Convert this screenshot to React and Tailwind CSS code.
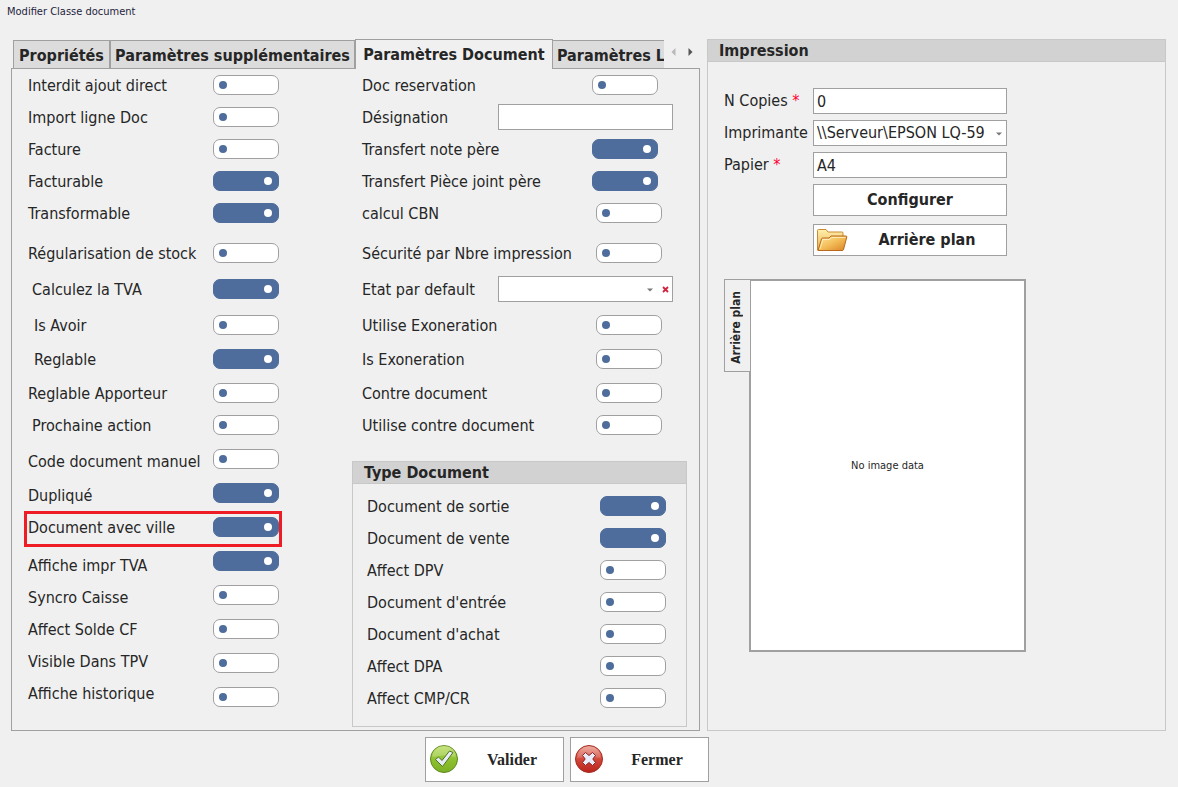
import { useState } from 'react'
import clsx from 'clsx'

// Each row keeps its own height for the label and for the switch
const generalOptions = [
  { id: 'ajout', label: 'Interdit ajout direct', labelH: 'h-8', switchH: 'h-8' },
  { id: 'import', label: 'Import ligne Doc', labelH: 'h-8', switchH: 'h-8' },
  { id: 'facture', label: 'Facture', labelH: 'h-8', switchH: 'h-8' },
  { id: 'facturable', label: 'Facturable', on: true, labelH: 'h-8', switchH: 'h-8' },
  { id: 'transformable', label: 'Transformable', on: true, labelH: 'h-10', switchH: 'h-10' },
  { id: 'stock', label: 'Régularisation de stock', labelH: 'h-9', switchH: 'h-9' },
  { id: 'tva', label: 'Calculez la TVA', on: true, indent: 'pl-1', labelH: 'h-9', switchH: 'h-9' },
  { id: 'avoir', label: 'Is Avoir', indent: 'pl-1.5', labelH: 'h-[34px]', switchH: 'h-[34px]' },
  { id: 'reglable', label: 'Reglable', on: true, indent: 'pl-1.5', labelH: 'h-[34px]', switchH: 'h-[34px]' },
  { id: 'apporteur', label: 'Reglable Apporteur', labelH: 'h-8', switchH: 'h-8' },
  { id: 'prochaine', label: 'Prochaine action', indent: 'pl-1', labelH: 'h-9', switchH: 'h-[34px]' },
  { id: 'manuel', label: 'Code document manuel', labelH: 'h-[34px]', switchH: 'h-[34px]' },
  { id: 'duplique', label: 'Dupliqué', on: true, labelH: 'h-8', switchH: 'h-[34px]' },
  { id: 'ville', label: 'Document avec ville', on: true, highlight: true, labelH: 'h-[38px]', switchH: 'h-[34px]' },
  { id: 'impr', label: 'Affiche impr TVA', on: true, labelH: 'h-8', switchH: 'h-[34px]' },
  { id: 'syncro', label: 'Syncro Caisse', labelH: 'h-8', switchH: 'h-[34px]' },
  { id: 'solde', label: 'Affect Solde CF', labelH: 'h-8', switchH: 'h-[34px]' },
  { id: 'tpv', label: 'Visible Dans TPV', labelH: 'h-8', switchH: 'h-[34px]' },
  { id: 'historique', label: 'Affiche historique', labelH: 'h-8', switchH: 'h-[34px]' },
]

const documentOptions = [
  { id: 'reservation', label: 'Doc reservation', margin: 'ml-[94px]', rowH: 'h-8' },
  { id: 'designation', label: 'Désignation', type: 'text', rowH: 'h-8' },
  { id: 'note', label: 'Transfert note père', on: true, margin: 'ml-[94px]', rowH: 'h-8' },
  { id: 'piece', label: 'Transfert Pièce joint père', on: true, margin: 'ml-[94px]', rowH: 'h-8' },
  { id: 'cbn', label: 'calcul CBN', margin: 'ml-[98px]', rowH: 'h-10' },
  { id: 'securite', label: 'Sécurité par Nbre impression', margin: 'ml-[98px]', rowH: 'h-9' },
  { id: 'etat', label: 'Etat par default', type: 'select', rowH: 'h-9' },
  { id: 'exoneration', label: 'Utilise Exoneration', margin: 'ml-[98px]', rowH: 'h-[34px]' },
  { id: 'isExoneration', label: 'Is Exoneration', margin: 'ml-[98px]', rowH: 'h-[34px]' },
  { id: 'contre', label: 'Contre document', margin: 'ml-[98px]', rowH: 'h-8' },
  { id: 'utiliseContre', label: 'Utilise contre document', margin: 'ml-[98px]', rowH: 'h-9' },
]

const typeOptions = [
  { id: 'sortie', label: 'Document de sortie', on: true },
  { id: 'vente', label: 'Document de vente', on: true },
  { id: 'dpv', label: 'Affect DPV' },
  { id: 'entree', label: "Document d'entrée" },
  { id: 'achat', label: "Document d'achat" },
  { id: 'dpa', label: 'Affect DPA' },
  { id: 'cmp', label: 'Affect CMP/CR' },
]

const field = 'h-[26px] w-full border border-[#a0a0a0] bg-white px-[3px] outline-none'

function Switch({ id, on, className }) {
  const [checked, setChecked] = useState(!!on)
  return (
    <input
      id={id}
      type="checkbox"
      role="switch"
      checked={checked}
      onChange={(e) => setChecked(e.target.checked)}
      className={clsx(
        'flex h-5 w-[66px] shrink-0 appearance-none items-center rounded-[7px] border border-[#a0a0a0] bg-white pr-1.5 pl-[5px]',
        'before:block before:size-2 before:rounded-full before:bg-[#4e6d9c]',
        'checked:justify-end checked:border-[#4e6d9c] checked:bg-[#4e6d9c] checked:before:bg-white',
        className
      )}
    />
  )
}

function Caret({ className }) {
  return (
    <svg viewBox="0 0 6 4" className={clsx('pointer-events-none absolute h-1 w-1.5', className)}>
      <path d="M0 0.5h6L3 3.5z" fill="#777" />
    </svg>
  )
}

function FolderIcon() {
  return (
    <svg viewBox="0 0 32 26" className="h-[26px] w-8 shrink-0">
      <defs>
        <linearGradient id="folderBack" x1="0" y1="0" x2="0" y2="1">
          <stop offset="0" stopColor="#fff0ac" />
          <stop offset="1" stopColor="#e9b04e" />
        </linearGradient>
        <linearGradient id="folderFront" x1="0" y1="0" x2="1" y2="1">
          <stop offset="0" stopColor="#ffe9a0" />
          <stop offset="0.5" stopColor="#f3bd58" />
          <stop offset="1" stopColor="#d98324" />
        </linearGradient>
      </defs>
      <path d="M1.5 23V3.500q0-1 1-1h7.500l2 2.500h14q1 0 1 1v17z" fill="url(#folderBack)" stroke="#c98a35" />
      <path d="M2 23.500l3.500-11.500q.3-1 1.300-1h6.200l2-2h15q1 0 .8 1l-3.300 12.500q-.3 1-1.300 1z" fill="url(#folderFront)" stroke="#b9681d" />
      <path d="M4 22l2.800-9.500h7l2-2h13.500" fill="none" stroke="#fff3c6" strokeOpacity="0.8" />
    </svg>
  )
}

function CheckIcon() {
  return (
    <svg viewBox="0 0 30 30" className="size-[30px] shrink-0">
      <defs>
        <linearGradient id="green" x1="0" y1="0" x2="0" y2="1">
          <stop offset="0" stopColor="#b9dc5a" />
          <stop offset="0.5" stopColor="#8fc231" />
          <stop offset="1" stopColor="#7cb024" />
        </linearGradient>
      </defs>
      <circle cx="15" cy="15" r="13.500" fill="url(#green)" stroke="#5d8a22" />
      <path d="M3.500 13a11.500 11.500 0 0 1 23 0q-11-3-23 0z" fill="#fff" fillOpacity="0.22" />
      <path d="M6.500 15.500l3-2.500 3.500 3.500 7.500-9.500 3.500 1.500L13.500 22.500z" fill="#e8ecf8" stroke="#4f7420" strokeLinejoin="round" />
    </svg>
  )
}

function CloseIcon() {
  return (
    <svg viewBox="0 0 30 30" className="size-[30px] shrink-0">
      <defs>
        <linearGradient id="red" x1="0" y1="0" x2="0" y2="1">
          <stop offset="0" stopColor="#eda394" />
          <stop offset="0.5" stopColor="#d2483a" />
          <stop offset="1" stopColor="#b9231c" />
        </linearGradient>
      </defs>
      <circle cx="15" cy="15" r="13.500" fill="url(#red)" stroke="#a32d24" />
      <path d="M3.500 14a11.500 11.500 0 0 1 23 0q-11-2-23 0z" fill="#fff" fillOpacity="0.15" />
      <path
        d="M11.500 8.500L15 11.500l3.500-3 3 3L18.800 15l2.700 3.500-3 3L15 18.500l-3.500 3-3-3 2.700-3.500-2.700-3.500z"
        fill="#e8ecf8"
        stroke="#8c2320"
        strokeLinejoin="round"
      />
    </svg>
  )
}

function Tabs() {
  const tab = 'h-7 shrink-0 overflow-hidden border border-b-0 border-[#a0a0a0] bg-[#dcdcdc] pt-0.5 whitespace-nowrap'
  return (
    <div role="tablist" className="flex items-end pl-0.5 text-base font-bold">
      <button role="tab" className={clsx(tab, 'w-[97px]')}>Propriétés</button>
      <button role="tab" className={clsx(tab, 'w-[245px]')}>Paramètres supplémentaires</button>
      <button role="tab" aria-selected="true" className="z-10 -mb-px h-[30px] w-[198px] shrink-0 border border-b-0 border-[#a0a0a0] bg-[#f0f0f0] whitespace-nowrap">
        Paramètres Document
      </button>
      <button role="tab" className={clsx(tab, 'w-[111px] border-x-0 pl-1 text-left')}>Paramètres Ligne</button>
      <div className="flex h-7 items-center gap-3 pb-1 pl-[7px]">
        <button aria-label="Précédent">
          <svg viewBox="0 0 5 8" className="h-2 w-[5px]"><path d="M4.500 0v8L0.500 4z" fill="#b8b8b8" /></svg>
        </button>
        <button aria-label="Suivant">
          <svg viewBox="0 0 5 8" className="h-2 w-[5px]"><path d="M0.500 0v8L4.500 4z" fill="#555" /></svg>
        </button>
      </div>
    </div>
  )
}

function GeneralColumn() {
  return (
    <div className="flex w-[340px] shrink-0 pl-4">
      <div className="w-[185px]">
        {generalOptions.map((o) => (
          <div key={o.id} className={clsx('relative', o.labelH, o.indent)}>
            <label htmlFor={o.id} className="flex h-8 items-center pt-0.5 whitespace-nowrap">{o.label}</label>
            {o.highlight && (
              <div className="pointer-events-none absolute top-0 -left-1 z-10 h-9 w-[258px] border-3 border-[#ee1c25]" />
            )}
          </div>
        ))}
      </div>
      <div>
        {generalOptions.map((o) => (
          <div key={o.id} className={o.switchH}>
            <div className="flex h-8 items-center">
              <Switch id={o.id} on={o.on} />
            </div>
          </div>
        ))}
      </div>
    </div>
  )
}

function Control({ option }) {
  if (option.type === 'text') return <input id={option.id} type="text" className={field} />
  if (option.type === 'select') {
    return (
      <div className="relative w-full">
        <select id={option.id} className={clsx(field, 'block appearance-none')}>
          <option></option>
        </select>
        <Caret className="top-3 right-5" />
        <button aria-label="Effacer" className="absolute top-2.5 right-1 flex">
          <svg viewBox="0 0 7 7" className="size-[7px]">
            <path d="M1 1l5 5M6 1L1 6" stroke="#d0243f" strokeWidth="1.800" />
          </svg>
        </button>
      </div>
    )
  }
  return <Switch id={option.id} on={option.on} className={option.margin} />
}

function DocumentColumn() {
  return (
    <div className="w-[335px] shrink-0 pb-[3px]">
      {documentOptions.map((o) => (
        <div key={o.id} className={o.rowH}>
          <div className="flex h-8 items-center pl-2.5">
            <label htmlFor={o.id} className="w-[136px] shrink-0 pt-0.5 whitespace-nowrap">{o.label}</label>
            <div className="flex w-[175px] shrink-0 items-center">
              <Control option={o} />
            </div>
          </div>
        </div>
      ))}

      <section className="mt-4 border border-[#c8c8c8] pb-3">
        <h2 className="h-[22px] border-b border-[#c8c8c8] bg-[#d2d2d2] pl-[11px] text-base leading-[22px] font-bold">Type Document</h2>
        <div className="pt-1.5">
          {typeOptions.map((o) => (
            <div key={o.id} className="flex h-8 items-center justify-between pr-5 pl-3.5">
              <label htmlFor={o.id} className="pt-0.5">{o.label}</label>
              <Switch id={o.id} on={o.on} />
            </div>
          ))}
        </div>
      </section>
    </div>
  )
}

function PrintPanel() {
  const button = 'flex h-8 w-full items-center border border-[#a0a0a0] bg-white text-base font-bold'
  return (
    <section className="border border-[#c8c8c8]">
      <h2 className="h-[22px] border-b border-[#c8c8c8] bg-[#d2d2d2] pl-[11px] text-base leading-[22px] font-bold">Impression</h2>
      <div className="px-4 pt-[26px]">
        <div className="grid grid-cols-[89px_194px] items-center gap-y-1.5">
          <label htmlFor="copies">N Copies <span className="text-[#ff0033]">*</span></label>
          <input id="copies" type="text" defaultValue="0" className={field} />
          <label htmlFor="imprimante">Imprimante</label>
          <div className="relative">
            <select id="imprimante" className={clsx(field, 'block appearance-none')}>
              <option>\\Serveur\EPSON LQ-59</option>
            </select>
            <Caret className="top-3 right-[5px]" />
          </div>
          <label htmlFor="papier">Papier <span className="text-[#ff0033]">*</span></label>
          <input id="papier" type="text" defaultValue="A4" className={field} />
          <div className="col-start-2 flex flex-col gap-2">
            <button className={clsx(button, 'justify-center')}>Configurer</button>
            <button className={clsx(button, 'pl-0.5')}>
              <FolderIcon />
              <span className="flex-1 text-center">Arrière plan</span>
            </button>
          </div>
        </div>

        <div className="mt-[23px] flex items-start">
          <button role="tab" className="z-10 -mr-0.5 flex h-[93px] w-[27px] items-center justify-center border border-[#a0a0a0] bg-[#f0f0f0] pt-1 pr-1 text-xs font-bold">
            <span className="rotate-180 whitespace-nowrap [writing-mode:vertical-rl]">Arrière plan</span>
          </button>
          <div className="flex h-[373px] w-[277px] items-center justify-center border-2 border-[#a0a0a0] bg-white pt-0.5 text-[11px]">
            No image data
          </div>
        </div>
      </div>
    </section>
  )
}

function App() {
  const action = "flex h-[45px] w-[139px] items-center border border-[#a0a0a0] bg-white pb-0.5 pl-[3px] font-['Liberation_Serif',serif] text-base font-bold"
  return (
    <div className="min-h-screen bg-[#f0f0f0] font-['DejaVu_Sans_Condensed','DejaVu_Sans',sans-serif] text-base text-[#262626]">
      <h1 className="h-[39px] pt-1 pl-[7px] text-[11px] leading-4 text-[#1e1e3c]">Modifier Classe document</h1>

      <main className="grid grid-cols-[689fr_459fr] gap-[7px] pr-3 pl-[11px]">
        <div className="flex min-w-0 flex-col">
          <Tabs />
          <div className="flex grow border border-[#a0a0a0]">
            <GeneralColumn />
            <DocumentColumn />
          </div>
        </div>
        <PrintPanel />
      </main>

      <footer className="flex justify-center gap-1.5 pt-1.5 pr-11">
        <button className={action}>
          <CheckIcon />
          <span className="flex-1 pt-0.5 pl-0.5 text-center">Valider</span>
        </button>
        <button className={action}>
          <CloseIcon />
          <span className="flex-1 pt-0.5 pl-0.5 text-center">Fermer</span>
        </button>
      </footer>
    </div>
  )
}

export default App
